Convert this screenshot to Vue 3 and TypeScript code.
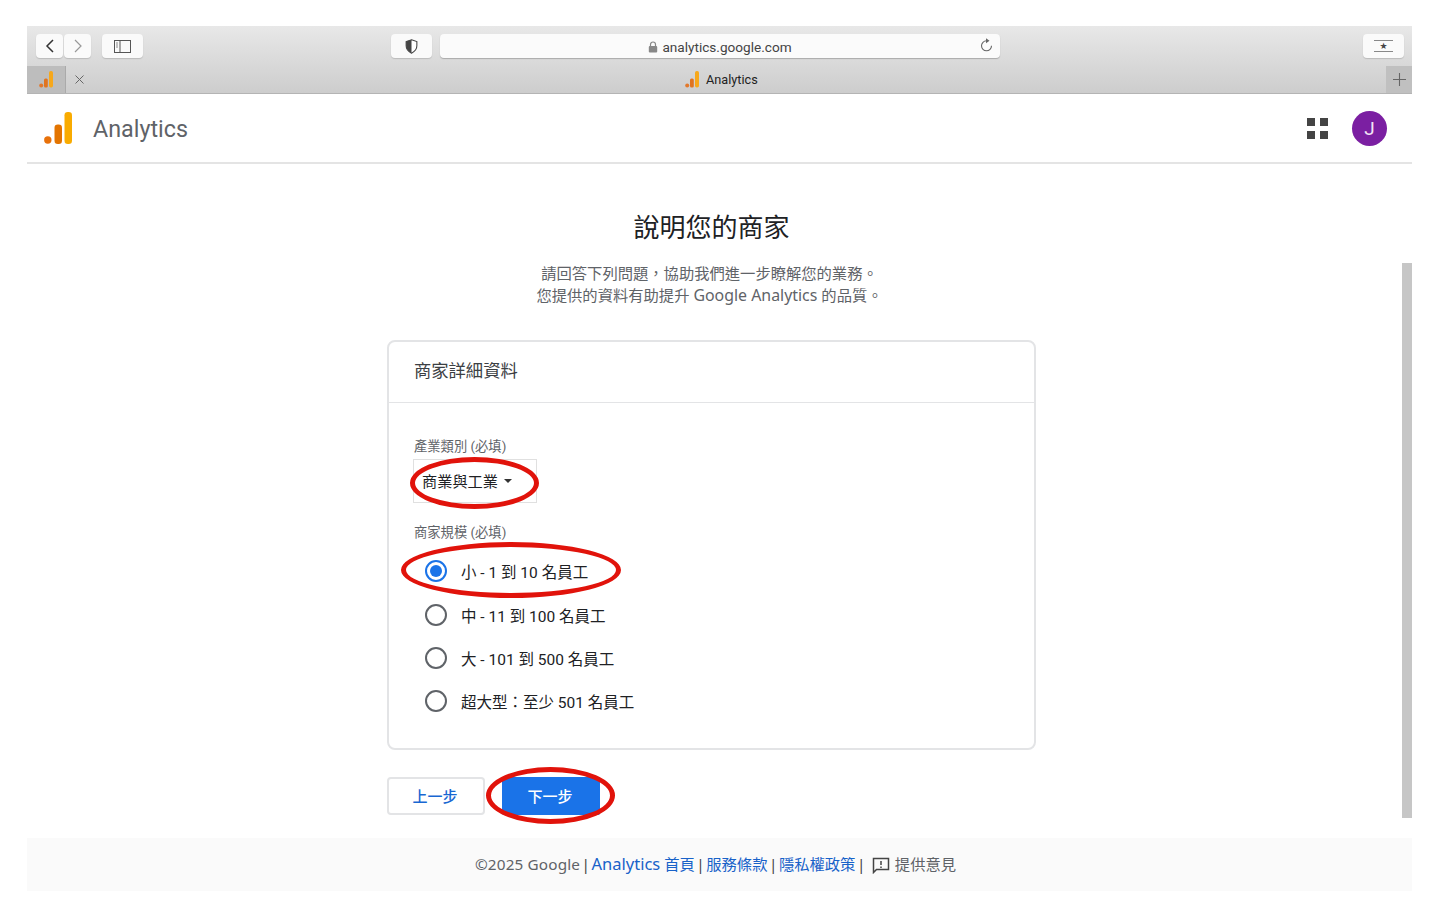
<script setup lang="ts">
const sizes = [
  { label: '小 - 1 到 10 名員工', on: true },
  { label: '中 - 11 到 100 名員工', on: false },
  { label: '大 - 101 到 500 名員工', on: false },
  { label: '超大型：至少 501 名員工', on: false },
]
</script>

<template>
  <div class="page">
    <div class="toolbar">
      <div class="navrow">
        <div class="group left">
          <div class="btn nav"><svg width="12" height="16" viewBox="0 0 12 16"><path d="M9 2 3 8l6 6" fill="none" stroke="#333" stroke-width="1.5"/></svg></div>
          <div class="btn nav"><svg width="12" height="16" viewBox="0 0 12 16"><path d="m3 2 6 6-6 6" fill="none" stroke="#999" stroke-width="1.2"/></svg></div>
          <div class="btn side"><svg width="17" height="13" viewBox="0 0 17 13"><rect x=".5" y=".5" width="16" height="12" fill="none" stroke="#555"/><path d="M6 .5v12" stroke="#555"/><path d="M2 3h2M2 5h2M2 7h2" stroke="#888"/></svg></div>
        </div>
        <div class="btn shield"><svg width="13" height="15" viewBox="0 0 12 14"><path d="M6 .8 11 2.400v4c0 3-2 5.400-5 6.800C3 11.800 1 9.400 1 6.400v-4z" fill="#fff" stroke="#444"/><path d="M6 .8 1 2.400v4c0 3 2 5.400 5 6.800z" fill="#444"/></svg></div>
        <div class="url">
          <svg class="lock" width="10" height="12" viewBox="0 0 10 12"><path d="M2.500 5.500V3.500a2.500 2.500 0 0 1 5 0v2" fill="none" stroke="#888" stroke-width="1.200"/><rect x=".8" y="5" width="8.400" height="6.500" rx="1" fill="#888"/></svg>
          <span>analytics.google.com</span>
          <svg class="reload" width="15" height="15" viewBox="0 0 15 15"><path d="M7.500 2.800a5 5 0 1 0 5 5" fill="none" stroke="#666" stroke-width="1.100"/><path d="M7 .2 10.500 2.800 7 5.200z" fill="#666"/></svg>
        </div>
        <div class="btn star"><span class="star-line"></span><span class="star-glyph">★</span><span class="star-line"></span></div>
      </div>
      <div class="tabrow">
        <div class="favtab">
          <svg width="14" height="17" viewBox="0 0 14 17"><circle cx="2.200" cy="14.500" r="2" fill="#e2782b"/><rect x="5" y="7.500" width="3.800" height="9" rx="1.500" fill="#e07420"/><rect x="10" y="0" width="4" height="16.500" rx="1.800" fill="#f7a81b"/></svg>
        </div>
        <div class="closetab"><svg width="9" height="9" viewBox="0 0 9 9"><path d="m.5.500 8 8m0-8-8 8" stroke="#666"/></svg></div>
        <div class="title">
          <svg width="14" height="17" viewBox="0 0 14 17"><circle cx="2.200" cy="14.500" r="2" fill="#e2782b"/><rect x="5" y="7.500" width="3.800" height="9" rx="1.500" fill="#e07420"/><rect x="10" y="0" width="4" height="16.500" rx="1.800" fill="#f7a81b"/></svg>
          <span>Analytics</span>
        </div>
        <div class="plustab"><svg width="13" height="13" viewBox="0 0 13 13"><path d="M6.500 0v13M0 6.500h13" stroke="#666" stroke-width="1.100"/></svg></div>
      </div>
    </div>

    <header class="appbar">
      <svg class="logo" width="28" height="32" viewBox="0 0 28 32"><circle cx="3.800" cy="28" r="3.700" fill="#e8710a"/><rect x="10.500" y="12.500" width="7.500" height="19.500" rx="3.300" fill="#e37400"/><rect x="20.500" y="0" width="7.500" height="32" rx="3.300" fill="#f9ab00"/></svg>
      <span class="brand">Analytics</span>
      <div class="grid-icon"><i></i><i></i><i></i><i></i></div>
      <div class="avatar">J</div>
    </header>

    <main class="content">
      <h1>說明您的商家</h1>
      <p class="sub">請回答下列問題，協助我們進一步瞭解您的業務。<br />您提供的資料有助提升 <span class="latin">Google Analytics</span> 的品質。</p>

      <section class="card">
        <div class="card-head">商家詳細資料</div>
        <div class="card-body">
          <div class="label">產業類別 (必填)</div>
          <div class="select">商業與工業<span class="caret"></span></div>
          <div class="label second">商家規模 (必填)</div>
          <div class="radios">
            <div v-for="s in sizes" :key="s.label" class="radio-row">
              <span class="radio" :class="{ on: s.on }"></span>
              <span>{{ s.label }}</span>
            </div>
          </div>
          <span class="ring r1"></span>
          <span class="ring r2"></span>
        </div>
      </section>

      <div class="actions">
        <button class="back">上一步</button>
        <button class="next">下一步</button>
        <span class="ring r3"></span>
      </div>
      <div class="scrollbar"></div>
    </main>

    <footer class="foot">
      <span class="copy">©2025 Google</span><span class="sep">|</span><a><span class="wide">Analytics</span> 首頁</a><span class="sep">|</span><a>服務條款</a><span class="sep">|</span><a>隱私權政策</a><span class="sep">|</span><svg class="fb" width="18" height="18" viewBox="0 0 18 18"><path d="M1.500 2.500h15v11H4.500l-3 3z" fill="none" stroke="#444" stroke-width="1.500"/><path d="M9 5v4M9 10.500v1.500" stroke="#444" stroke-width="1.500"/></svg><span class="fbtext">提供意見</span>
    </footer>
  </div>
</template>

<style>
html, body { margin: 0; background: #fff; }
</style>

<style scoped>
.page {
  width: 1385px;
  height: 917px;
  padding: 26px 28px 0 27px;
  font-family: Roboto, "Noto Sans CJK TC", sans-serif;
  color: #3c4043;
}
.toolbar {
  height: 68px;
  box-sizing: border-box;
  background: linear-gradient(#e8e8e8, #cdcdcd);
  border-bottom: 1px solid #b4b4b4;
}
.navrow {
  height: 40px;
  display: flex;
  align-items: center;
  padding: 0 8px 0 9px;
  position: relative;
}
.group { display: flex; gap: 1px; }
.btn {
  height: 24px;
  background: #fafafa;
  border-radius: 4px;
  box-shadow: 0 1px 1px #bbb;
  display: flex;
  align-items: center;
  justify-content: center;
  box-sizing: border-box;
}
.nav { width: 27px; }
.side { width: 41px; margin-left: 10px; }
.shield { width: 41px; margin-left: 248px; }
.url {
  width: 560px;
  height: 24px;
  margin-left: 8px;
  padding-top: 1px;
  box-sizing: border-box;
  background: #fbfbfb;
  border-radius: 4px;
  box-shadow: 0 1px 1px #aaa;
  display: flex;
  align-items: center;
  justify-content: center;
  gap: 4px;
  font-size: 13.600px;
  position: relative;
  color: #444;
}
.reload { position: absolute; right: 6px; top: 4px; }
.star {
  width: 41px;
  margin-left: auto;
  flex-direction: column;
  gap: 0;
}
.star-line { width: 19px; height: 1px; background: #888; }
.star-glyph { font: 9px/10px "DejaVu Sans", sans-serif; color: #444; }
.tabrow {
  height: 27px;
  display: flex;
  align-items: center;
  position: relative;
}
.favtab {
  width: 38px;
  height: 27px;
  background: #bdbdbd;
  border-right: 1px solid #aaa;
  display: flex;
  align-items: center;
  justify-content: center;
}
.closetab { margin-left: 9px; display: flex; }
.title {
  position: absolute;
  left: 658px;
  top: 5px;
  display: flex;
  align-items: center;
  gap: 7px;
  font-size: 12.700px;
  color: #222;
}
.plustab {
  margin-left: auto;
  width: 26px;
  height: 27px;
  background: #c0c0c0;
  display: flex;
  align-items: center;
  justify-content: center;
}
.appbar {
  height: 70px;
  box-sizing: border-box;
  border-bottom: 2px solid #e4e4e4;
  display: flex;
  align-items: center;
  padding: 0 25px 0 17px;
}
.brand {
  margin-left: 21px;
  font-size: 23.300px;
  color: #5f6368;
  padding-top: 1px;
}
.grid-icon {
  margin-left: auto;
  width: 21px;
  height: 21px;
  display: grid;
  grid-template-columns: 8px 8px;
  grid-template-rows: 8px 8px;
  gap: 5px;
}
.grid-icon i { background: #444; }
.avatar {
  margin-left: 24px;
  width: 35px;
  height: 35px;
  border-radius: 50%;
  background: #7b1fa2;
  color: #f3e5f5;
  font-size: 19px;
  display: flex;
  align-items: center;
  justify-content: center;
}
.content {
  height: 674px;
  box-sizing: border-box;
  padding-right: 16px;
  position: relative;
  display: flex;
  flex-direction: column;
  align-items: center;
}
h1 {
  margin: 46px 0 0;
  font-size: 26px;
  font-weight: 400;
  line-height: 36px;
  color: #202124;
}
.sub {
  margin: 16px 0 0;
  font-family: "Noto Sans", "Noto Sans CJK TC", sans-serif;
  font-size: 15.300px;
  line-height: 22px;
  text-align: center;
  color: #5f6368;
  padding-right: 4px;
}
.latin { font-size: 15.900px; }
.card {
  width: 649px;
  height: 410px;
  margin-top: 34px;
  box-sizing: border-box;
  border: 2px solid #e3e4e6;
  border-radius: 8px;
}
.card-head {
  height: 61px;
  box-sizing: border-box;
  border-bottom: 1px solid #e3e4e6;
  padding: 17px 0 0 25px;
  font-size: 17.300px;
  line-height: 24px;
  color: #3c4043;
}
.card-body {
  position: relative;
  padding: 35px 0 0 25px;
}
.label {
  font-size: 13.300px;
  line-height: 18px;
  color: #5f6368;
}
.second { margin-top: 21px; }
.select {
  width: 124px;
  height: 44px;
  margin: 3px 0 0 -1px;
  box-sizing: border-box;
  border: 1px solid #e0e0e0;
  display: flex;
  align-items: center;
  padding: 0 0 3px 8px;
  font-size: 15.200px;
  color: #202124;
}
.caret {
  margin: 3px 0 0 6px;
  border-left: 4px solid transparent;
  border-right: 4px solid transparent;
  border-top: 4px solid #333;
}
.radios { margin-top: 7.500px; margin-left: 11px; }
.radio-row {
  height: 43.400px;
  display: flex;
  align-items: center;
  gap: 14px;
  font-size: 15.500px;
  color: #202124;
}
.radio {
  width: 22px;
  height: 22px;
  box-sizing: border-box;
  border: 2px solid #5f6368;
  border-radius: 50%;
  position: relative;
}
.radio.on { border-color: #1a73e8; }
.radio.on::after {
  content: "";
  position: absolute;
  inset: 3px;
  border-radius: 50%;
  background: #1a73e8;
}
.ring {
  position: absolute;
  box-sizing: border-box;
  border: 5px solid #e1130b;
  border-radius: 50%;
  pointer-events: none;
}
.r1 { left: 21px; top: 54px; width: 129px; height: 52px; }
.r2 { left: 12px; top: 139px; width: 220px; height: 56px; }
.actions {
  width: 649px;
  margin-top: 27px;
  display: flex;
  gap: 17px;
  position: relative;
}
button {
  width: 98px;
  height: 38px;
  font: 500 15px "Noto Sans CJK TC", sans-serif;
  border-radius: 4px;
  padding: 0 2px 2px 0;
}
.back { background: #fff; border: 2px solid #e3e4e6; color: #1967d2; }
.next { background: #1a73e8; border: 0; border-radius: 2px; color: #fff; }
.r3 { left: 99px; top: -10px; width: 129px; height: 57px; }
.scrollbar {
  position: absolute;
  right: 0;
  top: 99px;
  width: 10px;
  height: 555px;
  background: #c6c6c6;
}
.foot {
  height: 53px;
  background: #fafafa;
  box-sizing: border-box;
  padding-right: 8px;
  text-align: center;
  line-height: 52px;
  font-family: "Noto Sans", "Noto Sans CJK TC", sans-serif;
  font-size: 15.300px;
  color: #5f6368;
  white-space: nowrap;
}
.foot a { color: #1862c9; }
.copy { letter-spacing: .15px; }
.wide { font-size: 16.500px; }
.sep { margin: 0 1.500px; color: #444; }
.fb { margin-left: 5px; vertical-align: -4px; }
.fbtext { margin-left: 5px; }
</style>
